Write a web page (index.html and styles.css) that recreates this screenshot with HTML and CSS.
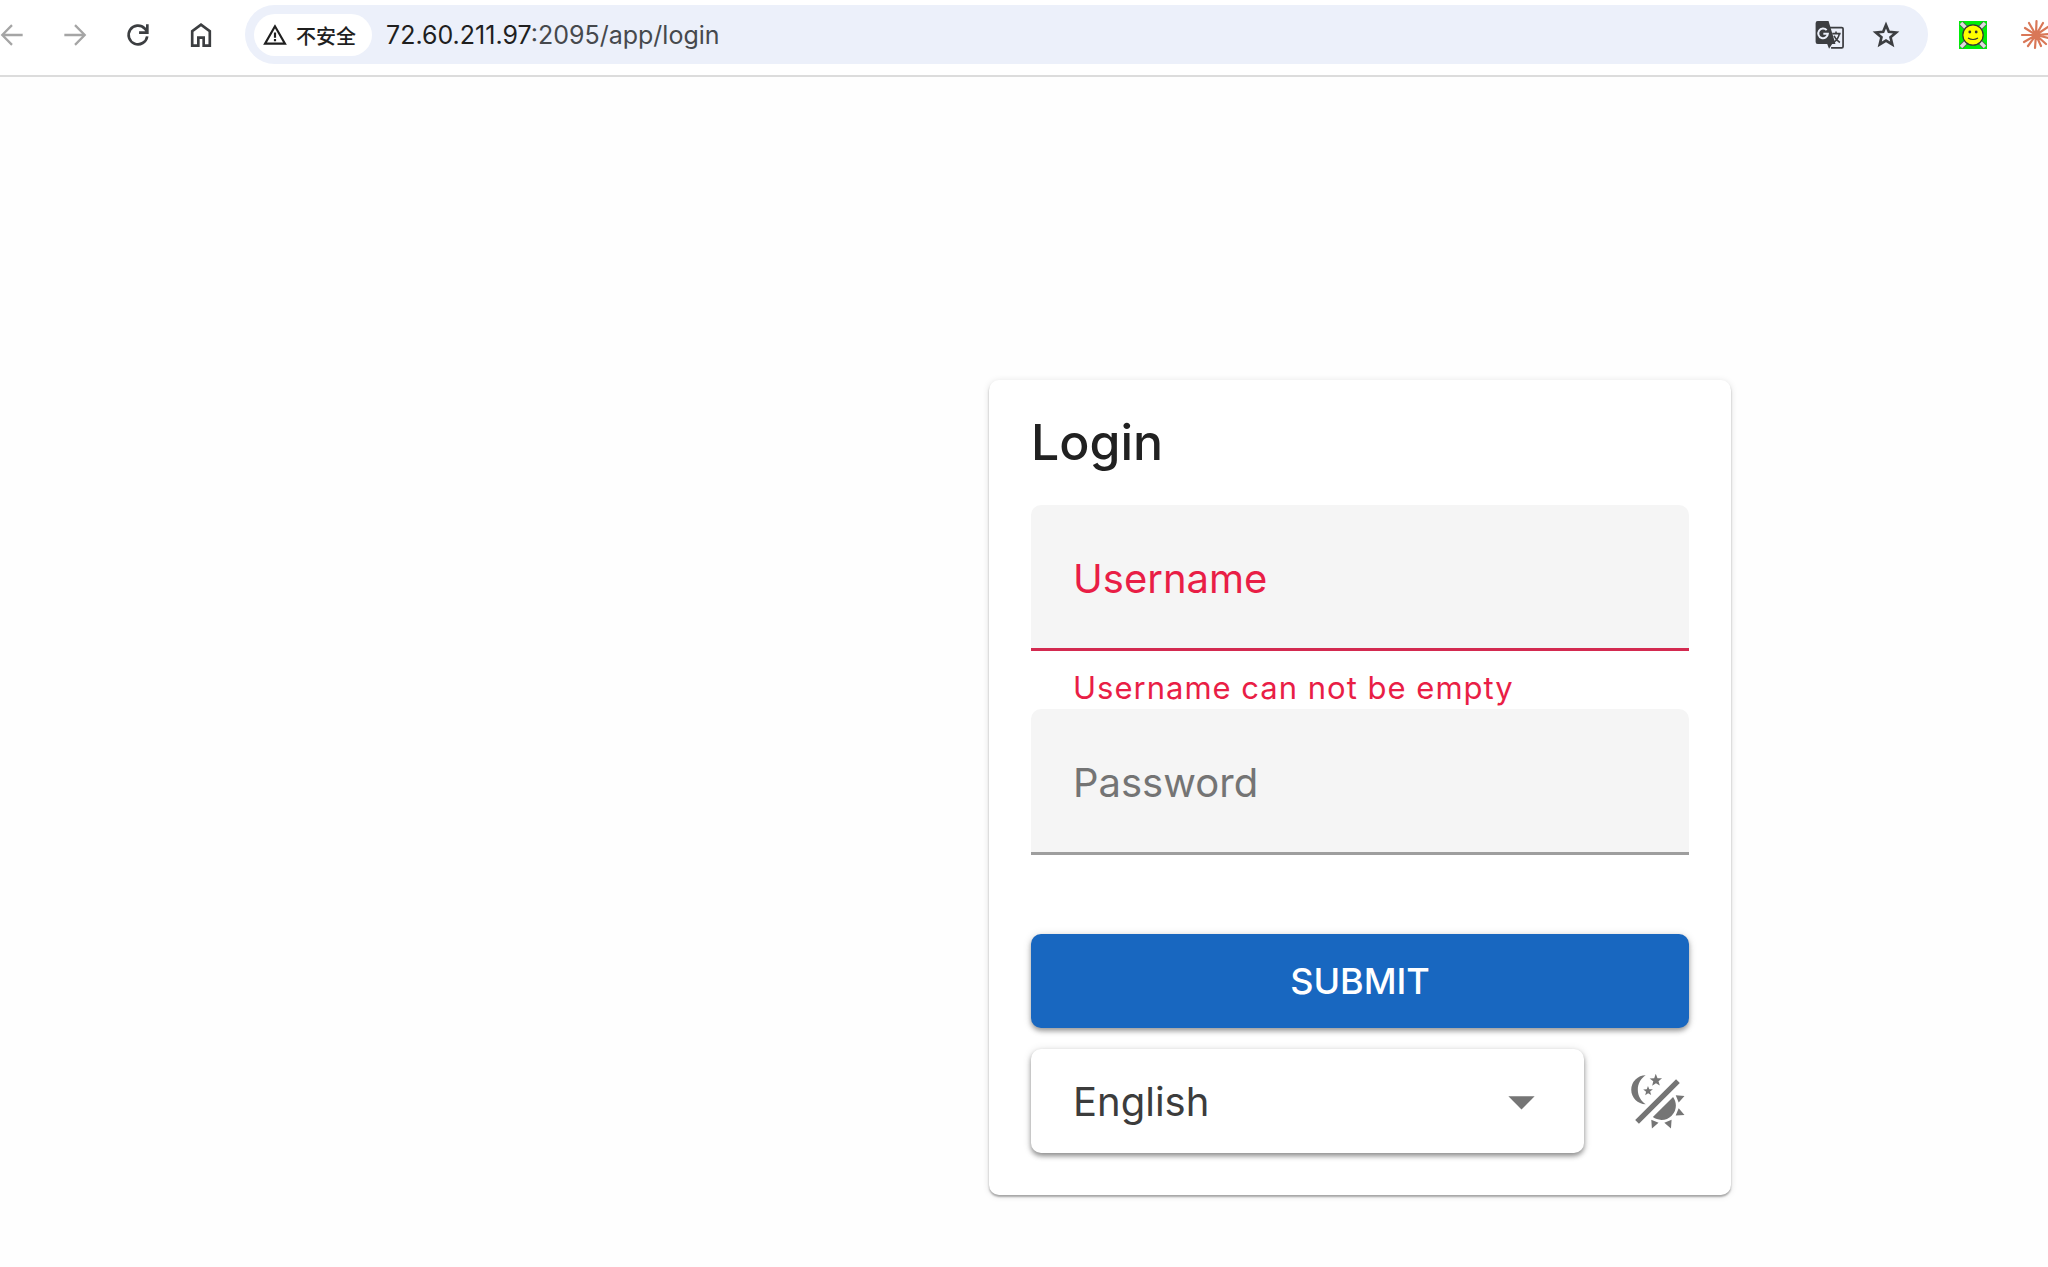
FILE: index.html
```html
<!DOCTYPE html>
<html lang="en">
<head>
  <meta charset="UTF-8" />
  <meta name="viewport" content="width=device-width, initial-scale=1.0" />
  <title>Login</title>
  <link rel="stylesheet" href="styles.css">
</head>
<body>
  <header class="toolbar">
    <nav class="nav-buttons">
      <button type="button" class="icon-btn" aria-label="Back" disabled>
        <svg viewBox="0 0 24 24"><path d="M20 12H5M12 4.6L4.7 12l7.3 7.4" fill="none" stroke="currentColor" stroke-width="1.7"/></svg>
      </button>
      <button type="button" class="icon-btn" aria-label="Forward" disabled>
        <svg viewBox="0 0 24 24"><path d="M4 12h15M12 4.6l7.3 7.4-7.3 7.4" fill="none" stroke="currentColor" stroke-width="1.7"/></svg>
      </button>
      <button type="button" class="icon-btn" aria-label="Reload">
        <svg viewBox="0 0 24 24"><path d="M18.9 13A7 7 0 1 1 17 7.1L19 9.5M19 4v6.2h-6.2" fill="none" stroke="currentColor" stroke-width="2"/></svg>
      </button>
      <button type="button" class="icon-btn" aria-label="Home">
        <svg viewBox="0 0 24 24"><path d="M5.4 20V9.2L12 4.2l6.6 5V20H14v-6h-4v6z" fill="none" stroke="currentColor" stroke-width="2"/></svg>
      </button>
    </nav>

    <div class="address-bar">
      <button type="button" class="security-chip">
        <svg viewBox="0 0 24 24"><path d="M12 4L2.8 20h18.4z" fill="none" stroke="currentColor" stroke-width="2"/><path d="M11 9.6h2v5h-2zM11 15.8h2v2h-2z" fill="currentColor"/></svg>
        <span lang="zh">不安全</span>
      </button>
      <a class="url" href="#"><span class="host">72.60.211.97</span>:2095/app/login</a>
      <button type="button" class="icon-btn" aria-label="Translate">
        <svg viewBox="0 0 24 24">
          <path d="M11 6.4h9.8a1 1 0 0 1 1 1v13.2a1 1 0 0 1-1 1h-8" fill="none" stroke="currentColor" stroke-width="1.3"/>
          <path d="M2.8 1.5h8.1l5.2 17.2h-2.5l-2.3 3.7-1.4-3.7H2.8A1.6 1.6 0 0 1 1.2 17V3.1a1.6 1.6 0 0 1 1.6-1.6z" fill="currentColor"/>
          <path d="M9.5 8.4A3.6 3.6 0 1 0 10.4 11H7" fill="none" stroke="#ecf0fa" stroke-width="1.5"/>
          <path d="M13.7 11H20M16.5 9.4V11M19 11.1c-.5 2.6-2 4.7-4 6.3M15 12.6c.9 2.2 2.3 3.7 4.4 5" fill="none" stroke="currentColor" stroke-width="1.2"/>
        </svg>
      </button>
      <button type="button" class="icon-btn" aria-label="Bookmark">
        <svg viewBox="0 0 24 24"><path d="M12 4.5l2.1 5.1 5.5.5-4.2 3.6 1.3 5.4-4.7-2.9-4.7 2.9 1.3-5.4-4.2-3.6 5.5-.5z" fill="none" stroke="currentColor" stroke-width="2"/></svg>
      </button>
    </div>

    <div class="extensions">
      <button type="button" class="icon-btn" aria-label="Smiley extension">
        <svg viewBox="0 0 32 32">
          <path d="M2 2h28v28H2z" fill="#00ee08"/>
          <path d="M4 4l24 24M28 4L4 28" stroke="#555" stroke-width="5"/>
          <path d="M4 4l24 24M28 4L4 28" stroke="#ddd" stroke-width="3.6"/>
          <circle cx="16" cy="16" r="10.2" fill="#ff0" stroke="#333" stroke-width="1.2"/>
          <circle cx="12.8" cy="13" r="1.4" fill="#333"/>
          <circle cx="19.2" cy="13" r="1.4" fill="#333"/>
          <path d="M11 19q5 3 10 0" fill="none" stroke="#333" stroke-width="1.2"/>
        </svg>
      </button>
      <button type="button" class="icon-btn" aria-label="Starburst extension">
        <svg viewBox="0 0 32 32"><path d="M16 16L16.5 2M16 16L23 4M16 16L28 8M16 16L29 15M16 16L29 19M16 16L26 25M16 16L21 27M16 16L15 29M16 16L8 27M16 16L4 23M16 16L2 16M16 16L5 9M16 16L9 4" fill="none" stroke="#d97757" stroke-width="2.2" stroke-linecap="round"/></svg>
      </button>
    </div>
  </header>

  <main class="page">
    <form class="login-card">
      <h1>Login</h1>

      <div class="field field-error">
        <label for="username">Username</label>
        <input type="text" id="username" name="username" aria-describedby="usernameError">
      </div>
      <p class="message" id="usernameError">Username can not be empty</p>

      <div class="field">
        <label for="password">Password</label>
        <input type="password" id="password" name="password">
      </div>

      <button type="submit" class="submit-btn">SUBMIT</button>

      <div class="options">
        <div class="language">
          <select id="language" aria-label="Language">
            <option>English</option>
          </select>
          <svg viewBox="0 0 24 24"><path d="M7 10l5 5 5-5z" fill="currentColor"/></svg>
        </div>
        <button type="button" class="theme-btn" aria-label="Change theme">
          <svg viewBox="0 0 24 24"><path fill="currentColor" d="M7.5,2C5.71,3.15 4.5,5.18 4.5,7.5C4.5,9.82 5.71,11.85 7.53,13C4.46,13 2,10.54 2,7.5A5.5,5.5 0 0,1 7.5,2M19.07,3.5L20.5,4.93L4.93,20.5L3.5,19.07L19.07,3.5M12.89,5.93L11.41,5L9.97,6L10.39,4.3L9,3.24L10.75,3.12L11.33,1.47L12,3.1L13.73,3.13L12.38,4.26L12.89,5.93M9.59,9.54L8.43,8.81L7.31,9.59L7.65,8.27L6.56,7.44L7.92,7.35L8.37,6.06L8.88,7.33L10.24,7.36L9.19,8.23L9.59,9.54M19,13.5A5.5,5.5 0 0,1 13.5,19C12.28,19 11.15,18.6 10.24,17.93L17.93,10.24C18.6,11.15 19,12.28 19,13.5M14.6,20.08L17.37,18.93L17.13,22.28L14.6,20.08M18.93,17.38L20.08,14.61L22.28,17.15L18.93,17.38M20.08,12.42L18.94,9.64L22.28,9.88L20.08,12.42M9.63,18.93L12.4,20.08L9.87,22.27L9.63,18.93Z"/></svg>
        </button>
      </div>
    </form>
  </main>
</body>
</html>
```

FILE: styles.css
```css
* {
  box-sizing: border-box;
}

body {
  margin: 0;
  font-family: Inter, "Noto Sans CJK SC", sans-serif;
  background-color: #fefefe;
  color: #212121;
  overflow-x: hidden;
}

button {
  font-family: inherit;
  border: none;
  background: none;
  padding: 0;
  cursor: pointer;
}

svg {
  display: block;
}

/* Browser toolbar */
.toolbar {
  display: flex;
  align-items: center;
  padding: 5px 0 11px;
  border-bottom: 2px solid #dcdcdc;
  background-color: #fff;
  overflow: hidden;
}

.nav-buttons {
  display: flex;
  gap: 31px;
  margin-left: -4px;
  margin-right: 28px;
}

.icon-btn {
  flex-shrink: 0;
  color: #3c3e41;
}

.icon-btn svg {
  width: 32px;
  height: 32px;
}

.icon-btn:disabled {
  color: #a5a5a5;
}

.address-bar {
  flex: 1;
  display: flex;
  align-items: center;
  gap: 24px;
  padding: 9px 26px 8px 9px;
  border-radius: 30px;
  background-color: #ecf0fa;
}

.security-chip {
  display: flex;
  align-items: center;
  gap: 8px;
  height: 42px;
  padding: 0 16px 0 8px;
  border-radius: 21px;
  background-color: #fff;
  color: #1f1f1f;
  font-size: 20px;
  font-weight: 500;
}

.security-chip svg {
  width: 26px;
  height: 26px;
}

.url {
  flex: 1;
  margin-left: -10px;
  font-size: 25px;
  color: #46494d;
  text-decoration: none;
}

.host {
  color: #1f1f1f;
}

.extensions {
  display: flex;
  gap: 31px;
  margin-left: 29px;
  margin-right: -4px;
}

/* Login page */
.page {
  display: flex;
  justify-content: flex-end;
  padding: 303px 317px 72px 42px;
}

.login-card {
  width: 100%;
  max-width: 742px;
  padding: 0 42px 42px;
  border-radius: 10px;
  background-color: #fff;
  box-shadow: 0 2px 2px rgba(0, 0, 0, 0.3), 0 1px 7px rgba(0, 0, 0, 0.12);
}

h1 {
  margin: 0;
  font-size: 50px;
  font-weight: 500;
  line-height: 125px;
}

/* The label sits in the same cell as its empty input */
.field {
  display: grid;
  align-items: center;
  height: 146px;
  border-bottom: 3px solid #9e9e9e;
  border-radius: 10px 10px 0 0;
  background-color: #f5f5f5;
  color: #747474;
}

.field label,
.field input {
  grid-area: 1 / 1;
  padding: 4px 42px 0;
  font-size: 40px;
}

.field input {
  width: 100%;
  height: 100%;
  border: none;
  outline: none;
  background: none;
  font-family: inherit;
}

.field-error {
  border-bottom-color: #d32a50;
  color: #e91e46;
}

.message {
  margin: 0;
  padding: 16px 42px 0;
  font-size: 31px;
  line-height: 42px;
  letter-spacing: 1px;
  color: #e91e46;
}

.submit-btn {
  display: block;
  width: 100%;
  height: 94px;
  margin: 79px 0 21px;
  border-radius: 10px;
  background-color: #1867c0;
  color: #fff;
  font-size: 36px;
  font-weight: 500;
  box-shadow: 0 3px 5px rgba(0, 0, 0, 0.35), 0 1px 10px rgba(0, 0, 0, 0.12);
}

.options {
  display: flex;
  align-items: center;
  gap: 42px;
}

.language {
  position: relative;
  flex: 1;
}

.language select {
  display: block;
  width: 100%;
  height: 104px;
  padding: 0 42px;
  border: none;
  border-radius: 10px;
  appearance: none;
  background-color: #fff;
  color: #3c3c3c;
  font-family: inherit;
  font-size: 40px;
  box-shadow: 0 3px 5px rgba(0, 0, 0, 0.4), 0 1px 10px rgba(0, 0, 0, 0.12);
}

.language svg {
  position: absolute;
  top: 21px;
  right: 31px;
  width: 63px;
  height: 63px;
  color: #757575;
  pointer-events: none;
}

.theme-btn {
  color: #757575;
}

.theme-btn svg {
  width: 63px;
  height: 63px;
}
```
